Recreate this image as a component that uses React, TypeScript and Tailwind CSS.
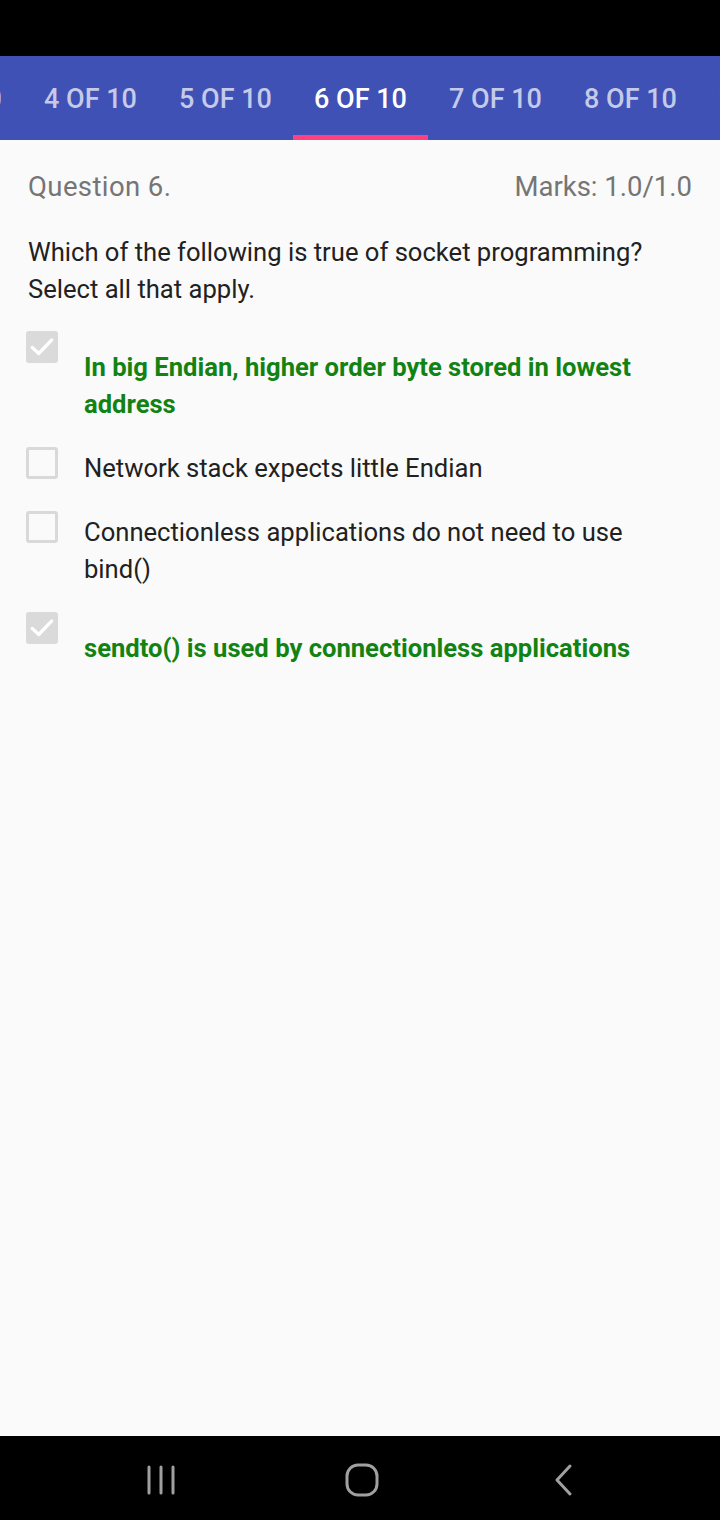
import React from 'react';

const tabs = ['3 OF 10', '4 OF 10', '5 OF 10', '6 OF 10', '7 OF 10', '8 OF 10', '9 OF 10'];

const options = [
  { text: 'In big Endian, higher order byte stored in lowest address', correct: true },
  { text: 'Network stack expects little Endian', correct: false },
  { text: 'Connectionless applications do not need to use bind()', correct: false },
  { text: 'sendto() is used by connectionless applications', correct: true },
];

function Checkbox({ checked }: { checked: boolean }) {
  if (checked) {
    return (
      <div className="w-8 h-8 shrink-0 rounded-[3px] bg-[#dadada] flex items-center justify-center">
        <svg width="26" height="26" viewBox="0 0 24 24" fill="none">
          <path d="M3 12.5l6 5.5L21 5.5" stroke="#ffffff" strokeWidth="3" strokeLinecap="round" strokeLinejoin="round" />
        </svg>
      </div>
    );
  }
  return <div className="w-8 h-8 shrink-0 rounded-[3px] border-[3px] border-[#d9d9d9] bg-[#fafafa]" />;
}

export default function App() {
  return (
    <div className="w-[720px] h-[1520px] flex flex-col bg-[#fafafa] font-['Roboto',sans-serif] overflow-hidden">
      <div className="h-14 bg-black shrink-0" />
      <div className="h-[84px] bg-[#3f51b5] shrink-0 overflow-hidden">
        <div className="flex h-full -ml-[112px]">
          {tabs.map((t) => {
            const active = t === '6 OF 10';
            return (
              <div key={t} className="w-[135px] shrink-0 h-full flex flex-col">
                <div
                  className={`flex-1 flex items-center justify-center pt-[7px] text-[27px] font-medium whitespace-nowrap ${
                    active ? 'text-white' : 'text-[#c5cae9]'
                  }`}
                >
                  {t}
                </div>
                <div className={`h-[5px] ${active ? 'bg-[#ff4081]' : ''}`} />
              </div>
            );
          })}
        </div>
      </div>

      <div className="flex-1 px-7 pt-[31px]">
        <div className="flex justify-between items-center h-8 text-[27.5px] text-[#757575]">
          <span className="tracking-[0.4px]">Question 6.</span>
          <span>Marks: 1.0/1.0</span>
        </div>
        <p className="mt-[31px] text-[25.6px] leading-[37px] text-[#212121]">
          Which of the following is true of socket programming?
          <br />
          Select all that apply.
        </p>
        <div className="mt-[23px] flex flex-col gap-6 -ml-[2px]">
          {options.map((o) => (
            <div key={o.text} className="flex items-start">
              <Checkbox checked={o.correct} />
              <div
                className={`ml-[26px] text-[25.6px] leading-[37px] pr-[40px] ${
                  o.correct ? 'mt-[18px] font-bold text-[#128312]' : 'mt-[3px] text-[#212121]'
                }`}
              >
                {o.text}
              </div>
            </div>
          ))}
        </div>
      </div>

      <div className="h-[84px] bg-black shrink-0 flex items-center pl-[60px] pt-[4px]">
        <div className="w-[201px] flex justify-center">
          <svg width="30" height="30" viewBox="0 0 30 30">
            <path d="M3 2v26M15 2v26M27 2v26" stroke="#a0a0a0" strokeWidth="3" strokeLinecap="round" />
          </svg>
        </div>
        <div className="w-[201px] flex justify-center">
          <svg width="34" height="34" viewBox="0 0 34 34">
            <rect x="2" y="2" width="30" height="30" rx="11" fill="none" stroke="#a0a0a0" strokeWidth="3" />
          </svg>
        </div>
        <div className="w-[201px] flex justify-center">
          <svg width="20" height="34" viewBox="0 0 20 34">
            <path d="M17 3L4 17l13 14" fill="none" stroke="#a0a0a0" strokeWidth="3" strokeLinecap="round" strokeLinejoin="round" />
          </svg>
        </div>
      </div>
    </div>
  );
}
